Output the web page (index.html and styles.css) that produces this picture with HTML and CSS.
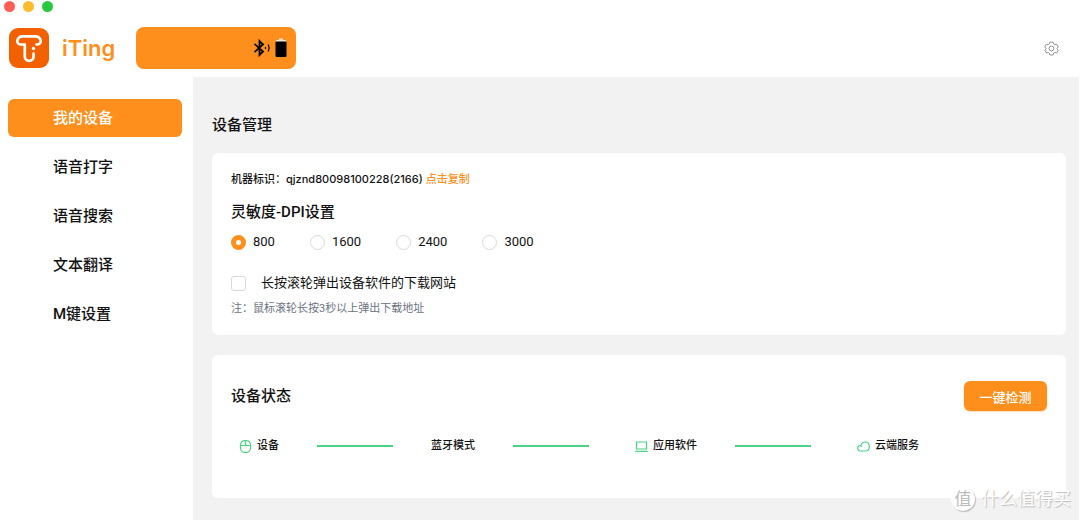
FILE: index.html
```html
<!DOCTYPE html>
<html lang="zh-CN">
<head>
  <meta charset="UTF-8">
  <meta name="viewport" content="width=device-width, initial-scale=1.0">
  <title>iTing</title>
  <link rel="stylesheet" href="styles.css">
</head>
<body>

  <header>
    <div class="window-buttons">
      <span class="dot red"></span>
      <span class="dot yellow"></span>
      <span class="dot green"></span>
    </div>
    <div class="topbar">
      <svg class="logo" viewBox="0 0 40 40" aria-hidden="true">
        <rect width="40" height="40" rx="9" fill="#f26000"/>
        <path d="M11.500 16.500A3.300 3.300 0 0 1 8.300 12.500Q9.500 8.300 13.500 8.300H26.500Q30.500 8.300 31.700 12.500A3.300 3.300 0 0 1 28.500 16.500H27.500M11.500 16.500H15.800V28.500a4.400 4.400 0 0 0 8.800 0V25.500" fill="none" stroke="#fff" stroke-width="2.700" stroke-linecap="round" stroke-linejoin="round"/>
        <circle cx="24.500" cy="20.500" r="1.700" fill="#fff"/>
      </svg>
      <span class="brand">iTing</span>
      <div class="device">
        <svg class="bluetooth" viewBox="0 0 18 18" fill="none" stroke="#000" aria-hidden="true">
          <path d="M1.500 4.800 10 12.500 6.500 16V2L10 5.500 1.500 13.200" stroke-width="1.800"/>
          <path d="M12.500 8v2M15.300 5.500q1.700 3.500 0 7" stroke-width="1.200"/>
        </svg>
        <svg class="battery" viewBox="0 0 12 20" aria-hidden="true">
          <path d="M4 0.500h4v1.500h2.500L11.500 4H0.500L1.500 2H4z" fill="#eee4da"/>
          <rect x="0.500" y="3.500" width="11" height="15.500" rx="1" fill="#000"/>
        </svg>
      </div>
      <button class="settings" aria-label="设置">
        <svg viewBox="0 0 16 16" fill="none" stroke="#888" aria-hidden="true">
          <path d="M6.300 1.200h3.400l.6 1.900 1.300.7 2-.4 1.600 2.900L13.900 7.800v.6l1.300 1.400-1.600 2.900-2-.4-1.300.7-.6 1.900H6.300l-.6-1.900-1.300-.7-2 .4L.8 9.800l1.300-1.400v-.6L.8 6.300l1.600-2.900 2 .4 1.300-.7z" stroke-linejoin="round"/>
          <circle cx="8" cy="8" r="2.600"/>
        </svg>
      </button>
    </div>
  </header>

  <div class="layout">
    <nav>
      <a href="#" class="active">我的设备</a>
      <a href="#">语音打字</a>
      <a href="#">语音搜索</a>
      <a href="#">文本翻译</a>
      <a href="#">M键设置</a>
    </nav>

    <main>
      <h1>设备管理</h1>

      <section class="card settings-card">
        <p class="machine">机器标识：qjznd80098100228(2166) <a href="#">点击复制</a></p>
        <h2>灵敏度-DPI设置</h2>
        <div class="dpi">
          <label><input type="radio" name="dpi" value="800" checked>800</label>
          <label><input type="radio" name="dpi" value="1600">1600</label>
          <label><input type="radio" name="dpi" value="2400">2400</label>
          <label><input type="radio" name="dpi" value="3000">3000</label>
        </div>
        <label class="popup"><input type="checkbox">长按滚轮弹出设备软件的下载网站</label>
        <p class="note">注：鼠标滚轮长按3秒以上弹出下载地址</p>
      </section>

      <section class="card status-card">
        <div class="status-head">
          <h2>设备状态</h2>
          <button class="check">一键检测</button>
        </div>
        <div class="status">
          <span class="step with-icon">
            <svg viewBox="0 0 13 13" aria-hidden="true"><path d="M1.500 5.200a3.700 4.500 0 0 1 3.700-4.500h2.600a3.700 4.500 0 0 1 3.700 4.500v2.600a3.700 4.500 0 0 1-3.700 4.500H5.200a3.700 4.500 0 0 1-3.700-4.500zM1.500 5.500h10M6.500 .7v4.800"/></svg>
            设备
          </span>
          <span class="line"></span>
          <span class="step">蓝牙模式</span>
          <span class="line"></span>
          <span class="step with-icon">
            <svg viewBox="0 0 13 13" aria-hidden="true"><path d="M1.500 2h10v7h-10zM.3 11.300h12.400"/></svg>
            应用软件
          </span>
          <span class="line"></span>
          <span class="step with-icon">
            <svg viewBox="0 0 13 13" aria-hidden="true"><path d="M4.800 6.800Q3.500 4.800 1.600 6C0 7.500 .6 11 3.500 11H8.500C11 11 12.400 9.200 12.300 6.500 12.200 3.500 10.300 2 8.200 2 5.800 2 4.300 3.500 4 5.400"/></svg>
            云端服务
          </span>
        </div>
      </section>
    </main>
  </div>

  <div class="watermark"><span class="badge">值</span>什么值得买</div>

</body>
</html>
```
FILE: styles.css
```css
* {
  box-sizing: border-box;
}

body {
  font-family: Roboto, "Noto Sans CJK SC", sans-serif;
  background-color: #fff;
  color: #111;
  margin: 0;
  position: relative;
}

h1, h2, p {
  margin: 0;
}

h1, h2 {
  font-size: 15px;
  font-weight: 500;
  line-height: 24px;
}

a {
  text-decoration: none;
}

button {
  border: none;
  padding: 0;
  font-family: inherit;
  cursor: pointer;
}

svg {
  display: block;
}

.window-buttons {
  display: flex;
  gap: 8px;
  padding: 1px 4px 0;
}

.dot {
  width: 11px;
  height: 11px;
  border-radius: 50%;
}

.red { background-color: #ff5f57; }
.yellow { background-color: #febc2e; }
.green { background-color: #28c840; }

.topbar {
  display: flex;
  align-items: center;
  padding: 15px 21px 8px 9px;
}

.logo {
  width: 40px;
  height: 40px;
}

.brand {
  font-family: Inter, sans-serif;
  font-size: 22px;
  font-weight: 600;
  color: #ff8f1c;
  margin: 0 21px 0 13px;
}

.device {
  display: flex;
  align-items: center;
  justify-content: flex-end;
  gap: 4px;
  width: 160px;
  height: 42px;
  padding-right: 9px;
  border-radius: 8px;
  background-color: #ff8f1c;
}

.bluetooth {
  width: 18px;
  height: 18px;
}

.battery {
  width: 12px;
  height: 20px;
}

.settings {
  margin-left: auto;
  background: none;
}

.settings svg {
  width: 15px;
  height: 15px;
}

.layout {
  display: flex;
}

nav {
  display: flex;
  flex-direction: column;
  gap: 11px;
  width: 193px;
  flex-shrink: 0;
  padding: 22px 11px 0 8px;
}

nav a {
  padding-left: 45px;
  border-radius: 6px;
  font-size: 15px;
  font-weight: 500;
  line-height: 38px;
  color: #111;
}

nav .active {
  background-color: #ff8f1c;
  color: #fff;
}

main {
  flex: 1;
  padding: 36px 13px 22px 19px;
  margin: 0 1px 1px 0;
  background-color: #f2f2f2;
}

h1 {
  margin-bottom: 16px;
}

.card {
  background-color: #fff;
  border-radius: 6px;
}

.settings-card {
  padding: 16px 19px;
  margin-bottom: 20px;
}

.machine {
  font-family: Inter, "Noto Sans CJK SC", sans-serif;
  font-size: 11px;
  font-weight: 500;
  line-height: 20px;
  margin-bottom: 11px;
}

.machine a {
  color: #ff8f1c;
}

.dpi {
  display: flex;
  gap: 35px;
  margin: 10px 0 25px;
}

.dpi label, .popup {
  display: flex;
  align-items: center;
  gap: 7px;
  font-size: 13px;
  line-height: 16px;
  color: #111;
}

.popup {
  gap: 15px;
}

input {
  appearance: none;
  width: 15px;
  height: 15px;
  margin: 0;
  border: 1px solid #d9d9d9;
  background-color: #fff;
}

input[type="radio"] {
  border-radius: 50%;
}

input[type="radio"]:checked {
  border: 5px solid #ff8f1c;
}

input[type="checkbox"] {
  border-radius: 3px;
}

.note {
  margin-top: 8px;
  font-size: 11px;
  line-height: 20px;
  color: #6b7280;
}

.status-card {
  padding: 26px 19px 42px;
}

.status-head {
  display: flex;
  align-items: center;
  justify-content: space-between;
  margin-bottom: 25px;
}

.check {
  width: 83px;
  height: 30px;
  border-radius: 6px;
  background-color: #ff8f1c;
  box-shadow: 0 1px 2px rgba(255, 143, 28, 0.3);
  color: #fff;
  font-size: 13px;
  font-weight: 500;
}

.status {
  display: flex;
  align-items: center;
  gap: 38px;
}

.step {
  display: flex;
  align-items: center;
  gap: 5px;
  font-size: 11px;
  font-weight: 500;
  line-height: 20px;
}

.with-icon {
  padding-left: 8px;
}

.step svg {
  width: 13px;
  height: 13px;
  fill: none;
  stroke: #4bd284;
  stroke-width: 1.2;
}

.line {
  width: 76px;
  height: 2px;
  background-color: #4bd284;
}

.watermark {
  position: absolute;
  right: 9px;
  bottom: 10px;
  display: flex;
  align-items: center;
  gap: 6px;
  font-size: 18px;
  line-height: 24px;
  color: #fff;
  text-shadow: 1px 1px 1px #bbb;
}

.badge {
  width: 24px;
  height: 24px;
  border-radius: 50%;
  background-color: #fff;
  box-shadow: 1px 1px 1px #bbb;
  color: #bbb;
  font-size: 17px;
  text-align: center;
  text-shadow: none;
}
```
